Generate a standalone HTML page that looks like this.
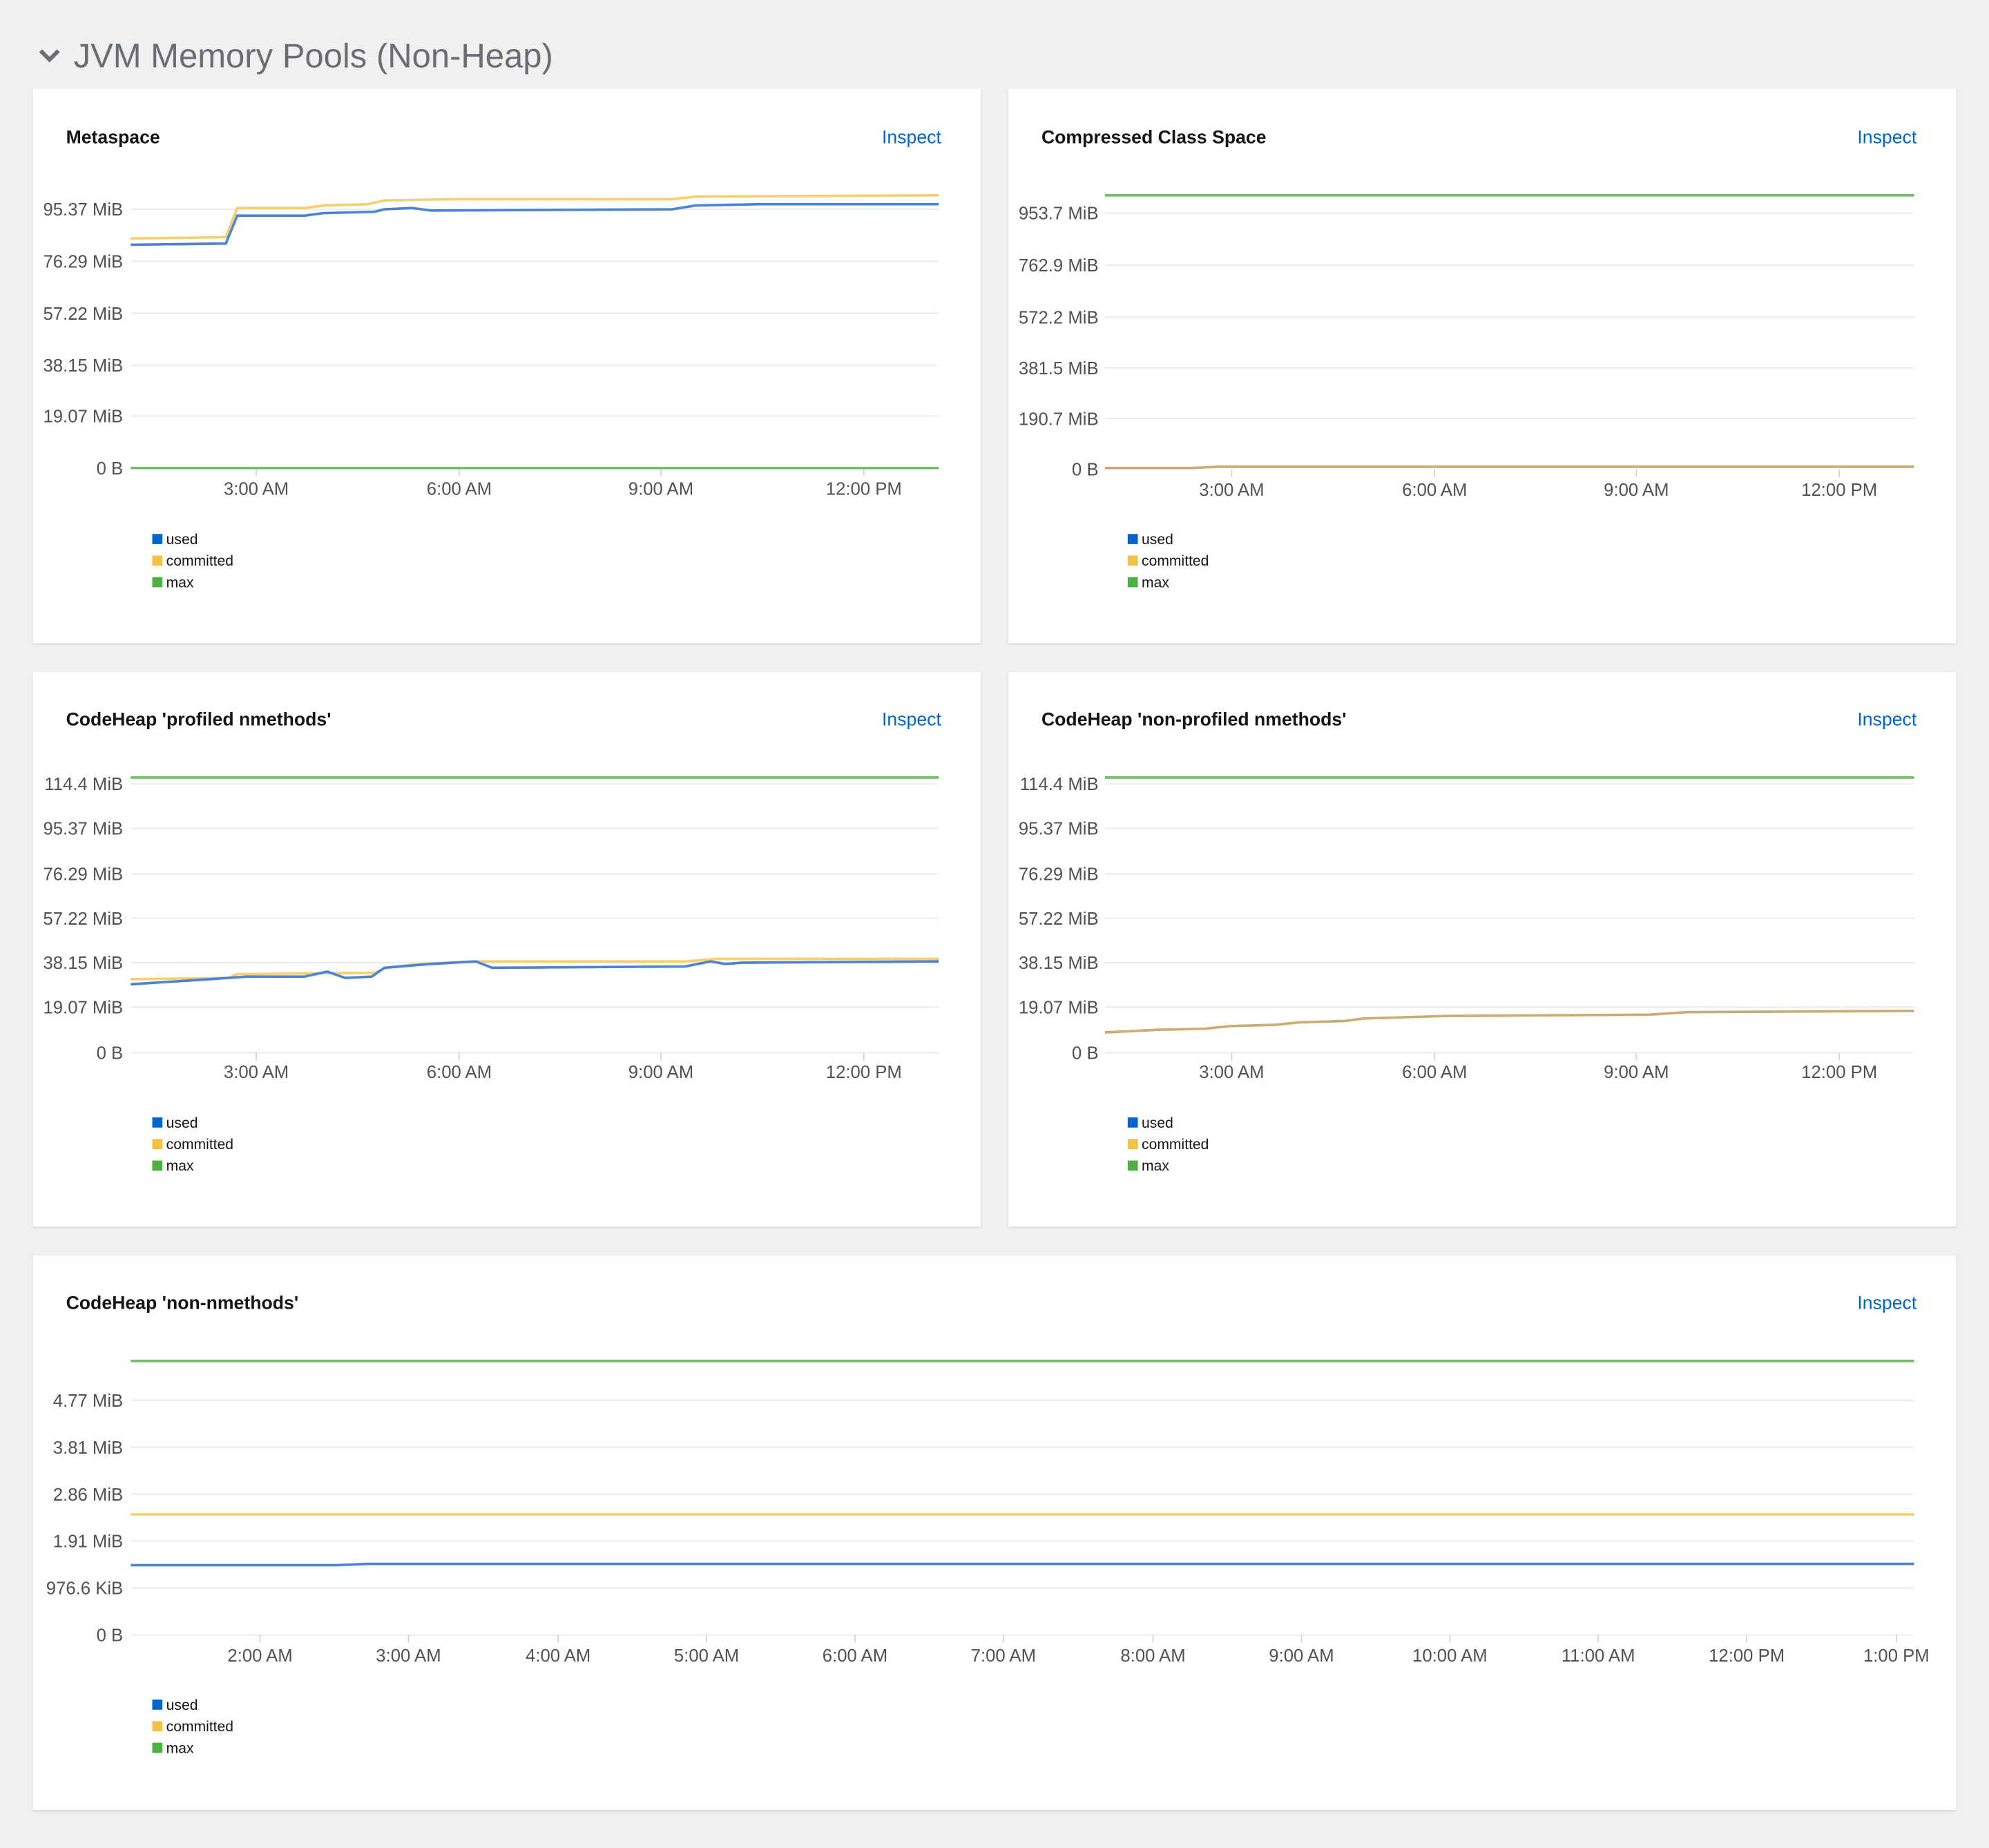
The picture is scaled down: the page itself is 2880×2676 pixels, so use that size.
<!DOCTYPE html>
<html><head><meta charset="utf-8"><style>
html,body{margin:0;padding:0;background:#f0f0f0;}
svg{display:block;}
text{font-family:"Liberation Sans",sans-serif;}
.yl{font-size:14px;fill:#4f5255;text-anchor:end;}
.xl{font-size:14px;fill:#4f5255;text-anchor:middle;}
.t{font-size:14.5px;font-weight:bold;fill:#151515;}
.i{font-size:14.5px;fill:#0066cc;text-anchor:end;}
.lg{font-size:11.5px;fill:#151515;}
.g{stroke:#ececec;stroke-width:1.2;}
.tk{stroke:#d2d2d2;stroke-width:1;}
.u{fill:none;stroke:#4a84d9;stroke-width:2;}
.c{fill:none;stroke:#f7cf6e;stroke-width:2;}
.m{fill:none;stroke:#72bf68;stroke-width:2;}
.card{fill:#fff;}
</style></head><body>
<svg width="2880" height="2676" viewBox="0 0 1568 1457" xmlns="http://www.w3.org/2000/svg">
<defs><filter id="sh" x="-5%" y="-5%" width="110%" height="110%"><feDropShadow dx="0" dy="1" stdDeviation="1" flood-color="#000" flood-opacity="0.12"/></filter></defs>
<rect width="1568" height="1457" fill="#f0f0f0"/>
<path d="M32 40 L39 47 L46 40" fill="none" stroke="#6a6e73" stroke-width="3.2"/>
<text x="58" y="53" style="font-size:26.5px;fill:#6a6e73" textLength="378" lengthAdjust="spacingAndGlyphs">JVM Memory Pools (Non-Heap)</text>

<rect class="card" x="26" y="70" width="747" height="437" filter="url(#sh)"/>
<rect class="card" x="795" y="70" width="747" height="437" filter="url(#sh)"/>
<rect class="card" x="26" y="530" width="747" height="437" filter="url(#sh)"/>
<rect class="card" x="795" y="530" width="747" height="437" filter="url(#sh)"/>
<rect class="card" x="26" y="990" width="1516" height="437" filter="url(#sh)"/>

<!-- Card 1 Metaspace -->
<text class="t" x="52" y="113">Metaspace</text><text class="i" x="742" y="113">Inspect</text>
<g class="g"><line x1="103" x2="740" y1="165" y2="165"/><line x1="103" x2="740" y1="206" y2="206"/><line x1="103" x2="740" y1="247" y2="247"/><line x1="103" x2="740" y1="288" y2="288"/><line x1="103" x2="740" y1="328" y2="328"/></g>
<g class="tk"><line x1="202" x2="202" y1="369" y2="375"/><line x1="362" x2="362" y1="369" y2="375"/><line x1="521" x2="521" y1="369" y2="375"/><line x1="681" x2="681" y1="369" y2="375"/></g>
<text class="yl" x="97" y="170">95.37 MiB</text><text class="yl" x="97" y="211">76.29 MiB</text><text class="yl" x="97" y="252">57.22 MiB</text><text class="yl" x="97" y="293">38.15 MiB</text><text class="yl" x="97" y="333">19.07 MiB</text><text class="yl" x="97" y="374">0 B</text>
<text class="xl" x="202" y="390">3:00 AM</text><text class="xl" x="362" y="390">6:00 AM</text><text class="xl" x="521" y="390">9:00 AM</text><text class="xl" x="681" y="390">12:00 PM</text>
<polyline class="c" points="103,188 178,187 187,164 240,164 255,162 290,161 303,158 360,157 530,157 548,155 740,154"/>
<polyline class="u" points="103,193 178,192 187,170 240,170 255,168 295,167 303,165 325,164 340,166 530,165 548,162 600,161 740,161"/>
<line class="m" x1="103" x2="740" y1="369" y2="369"/>
<rect x="120" y="421" width="8" height="8" fill="#0066cc"/><text class="lg" x="131" y="429">used</text>
<rect x="120" y="438" width="8" height="8" fill="#f4c145"/><text class="lg" x="131" y="446">committed</text>
<rect x="120" y="455" width="8" height="8" fill="#4cb140"/><text class="lg" x="131" y="463">max</text>

<!-- Card 2 Compressed -->
<text class="t" x="821" y="113">Compressed Class Space</text><text class="i" x="1511" y="113">Inspect</text>
<g class="g"><line x1="871" x2="1509" y1="168" y2="168"/><line x1="871" x2="1509" y1="209" y2="209"/><line x1="871" x2="1509" y1="250" y2="250"/><line x1="871" x2="1509" y1="290" y2="290"/><line x1="871" x2="1509" y1="330" y2="330"/></g>
<g class="tk"><line x1="971" x2="971" y1="370" y2="376"/><line x1="1131" x2="1131" y1="370" y2="376"/><line x1="1290" x2="1290" y1="370" y2="376"/><line x1="1450" x2="1450" y1="370" y2="376"/></g>
<text class="yl" x="866" y="173">953.7 MiB</text><text class="yl" x="866" y="214">762.9 MiB</text><text class="yl" x="866" y="255">572.2 MiB</text><text class="yl" x="866" y="295">381.5 MiB</text><text class="yl" x="866" y="335">190.7 MiB</text><text class="yl" x="866" y="375">0 B</text>
<text class="xl" x="971" y="391">3:00 AM</text><text class="xl" x="1131" y="391">6:00 AM</text><text class="xl" x="1290" y="391">9:00 AM</text><text class="xl" x="1450" y="391">12:00 PM</text>
<line class="m" x1="871" x2="1509" y1="154" y2="154"/>
<polyline style="fill:none;stroke:#c9ad72;stroke-width:2" points="871,369 940,369 960,368 1509,368"/>
<rect x="889" y="421" width="8" height="8" fill="#0066cc"/><text class="lg" x="900" y="429">used</text>
<rect x="889" y="438" width="8" height="8" fill="#f4c145"/><text class="lg" x="900" y="446">committed</text>
<rect x="889" y="455" width="8" height="8" fill="#4cb140"/><text class="lg" x="900" y="463">max</text>

<!-- Card 3 profiled -->
<text class="t" x="52" y="572">CodeHeap 'profiled nmethods'</text><text class="i" x="742" y="572">Inspect</text>
<g class="g"><line x1="103" x2="740" y1="618" y2="618"/><line x1="103" x2="740" y1="653" y2="653"/><line x1="103" x2="740" y1="689" y2="689"/><line x1="103" x2="740" y1="724" y2="724"/><line x1="103" x2="740" y1="759" y2="759"/><line x1="103" x2="740" y1="794" y2="794"/><line x1="103" x2="740" y1="830" y2="830"/></g>
<g class="tk"><line x1="202" x2="202" y1="830" y2="836"/><line x1="362" x2="362" y1="830" y2="836"/><line x1="521" x2="521" y1="830" y2="836"/><line x1="681" x2="681" y1="830" y2="836"/></g>
<text class="yl" x="97" y="623">114.4 MiB</text><text class="yl" x="97" y="658">95.37 MiB</text><text class="yl" x="97" y="694">76.29 MiB</text><text class="yl" x="97" y="729">57.22 MiB</text><text class="yl" x="97" y="764">38.15 MiB</text><text class="yl" x="97" y="799">19.07 MiB</text><text class="yl" x="97" y="835">0 B</text>
<text class="xl" x="202" y="850">3:00 AM</text><text class="xl" x="362" y="850">6:00 AM</text><text class="xl" x="521" y="850">9:00 AM</text><text class="xl" x="681" y="850">12:00 PM</text>
<line class="m" x1="103" x2="740" y1="613" y2="613"/>
<polyline class="c" points="103,772 180,771 187,768 295,767 305,763 330,760 375,758 540,758 565,756 740,756"/>
<polyline class="u" points="103,776 150,773 180,771 195,770 240,770 258,766 272,771 293,770 303,763 340,760 375,758 388,763 540,762 560,758 572,760 585,759 740,758"/>
<rect x="120" y="881" width="8" height="8" fill="#0066cc"/><text class="lg" x="131" y="889">used</text>
<rect x="120" y="898" width="8" height="8" fill="#f4c145"/><text class="lg" x="131" y="906">committed</text>
<rect x="120" y="915" width="8" height="8" fill="#4cb140"/><text class="lg" x="131" y="923">max</text>

<!-- Card 4 non-profiled -->
<text class="t" x="821" y="572">CodeHeap 'non-profiled nmethods'</text><text class="i" x="1511" y="572">Inspect</text>
<g class="g"><line x1="871" x2="1509" y1="618" y2="618"/><line x1="871" x2="1509" y1="653" y2="653"/><line x1="871" x2="1509" y1="689" y2="689"/><line x1="871" x2="1509" y1="724" y2="724"/><line x1="871" x2="1509" y1="759" y2="759"/><line x1="871" x2="1509" y1="794" y2="794"/><line x1="871" x2="1509" y1="830" y2="830"/></g>
<g class="tk"><line x1="971" x2="971" y1="830" y2="836"/><line x1="1131" x2="1131" y1="830" y2="836"/><line x1="1290" x2="1290" y1="830" y2="836"/><line x1="1450" x2="1450" y1="830" y2="836"/></g>
<text class="yl" x="866" y="623">114.4 MiB</text><text class="yl" x="866" y="658">95.37 MiB</text><text class="yl" x="866" y="694">76.29 MiB</text><text class="yl" x="866" y="729">57.22 MiB</text><text class="yl" x="866" y="764">38.15 MiB</text><text class="yl" x="866" y="799">19.07 MiB</text><text class="yl" x="866" y="835">0 B</text>
<text class="xl" x="971" y="850">3:00 AM</text><text class="xl" x="1131" y="850">6:00 AM</text><text class="xl" x="1290" y="850">9:00 AM</text><text class="xl" x="1450" y="850">12:00 PM</text>
<line class="m" x1="871" x2="1509" y1="613" y2="613"/>
<polyline style="fill:none;stroke:#c9ad72;stroke-width:2" points="871,814 910,812 950,811 970,809 1005,808 1025,806 1060,805 1075,803 1140,801 1300,800 1330,798 1509,797"/>
<rect x="889" y="881" width="8" height="8" fill="#0066cc"/><text class="lg" x="900" y="889">used</text>
<rect x="889" y="898" width="8" height="8" fill="#f4c145"/><text class="lg" x="900" y="906">committed</text>
<rect x="889" y="915" width="8" height="8" fill="#4cb140"/><text class="lg" x="900" y="923">max</text>

<!-- Card 5 non-nmethods -->
<text class="t" x="52" y="1032">CodeHeap 'non-nmethods'</text><text class="i" x="1511" y="1032">Inspect</text>
<g class="g"><line x1="103" x2="1509" y1="1104" y2="1104"/><line x1="103" x2="1509" y1="1141" y2="1141"/><line x1="103" x2="1509" y1="1178" y2="1178"/><line x1="103" x2="1509" y1="1215" y2="1215"/><line x1="103" x2="1509" y1="1252" y2="1252"/><line x1="103" x2="1509" y1="1289" y2="1289"/></g>
<g class="tk"><line x1="205" x2="205" y1="1289" y2="1295"/><line x1="322" x2="322" y1="1289" y2="1295"/><line x1="440" x2="440" y1="1289" y2="1295"/><line x1="557" x2="557" y1="1289" y2="1295"/><line x1="674" x2="674" y1="1289" y2="1295"/><line x1="791" x2="791" y1="1289" y2="1295"/><line x1="909" x2="909" y1="1289" y2="1295"/><line x1="1026" x2="1026" y1="1289" y2="1295"/><line x1="1143" x2="1143" y1="1289" y2="1295"/><line x1="1260" x2="1260" y1="1289" y2="1295"/><line x1="1377" x2="1377" y1="1289" y2="1295"/><line x1="1495" x2="1495" y1="1289" y2="1295"/></g>
<text class="yl" x="97" y="1109">4.77 MiB</text><text class="yl" x="97" y="1146">3.81 MiB</text><text class="yl" x="97" y="1183">2.86 MiB</text><text class="yl" x="97" y="1220">1.91 MiB</text><text class="yl" x="97" y="1257">976.6 KiB</text><text class="yl" x="97" y="1294">0 B</text>
<text class="xl" x="205" y="1310">2:00 AM</text><text class="xl" x="322" y="1310">3:00 AM</text><text class="xl" x="440" y="1310">4:00 AM</text><text class="xl" x="557" y="1310">5:00 AM</text><text class="xl" x="674" y="1310">6:00 AM</text><text class="xl" x="791" y="1310">7:00 AM</text><text class="xl" x="909" y="1310">8:00 AM</text><text class="xl" x="1026" y="1310">9:00 AM</text><text class="xl" x="1143" y="1310">10:00 AM</text><text class="xl" x="1260" y="1310">11:00 AM</text><text class="xl" x="1377" y="1310">12:00 PM</text><text class="xl" x="1495" y="1310">1:00 PM</text>
<line class="m" x1="103" x2="1509" y1="1073" y2="1073"/>
<line class="c" x1="103" x2="1509" y1="1194" y2="1194"/>
<polyline class="u" points="103,1234 265,1234 290,1233 1509,1233"/>
<rect x="120" y="1340" width="8" height="8" fill="#0066cc"/><text class="lg" x="131" y="1348">used</text>
<rect x="120" y="1357" width="8" height="8" fill="#f4c145"/><text class="lg" x="131" y="1365">committed</text>
<rect x="120" y="1374" width="8" height="8" fill="#4cb140"/><text class="lg" x="131" y="1382">max</text>
</svg>
</body></html>
